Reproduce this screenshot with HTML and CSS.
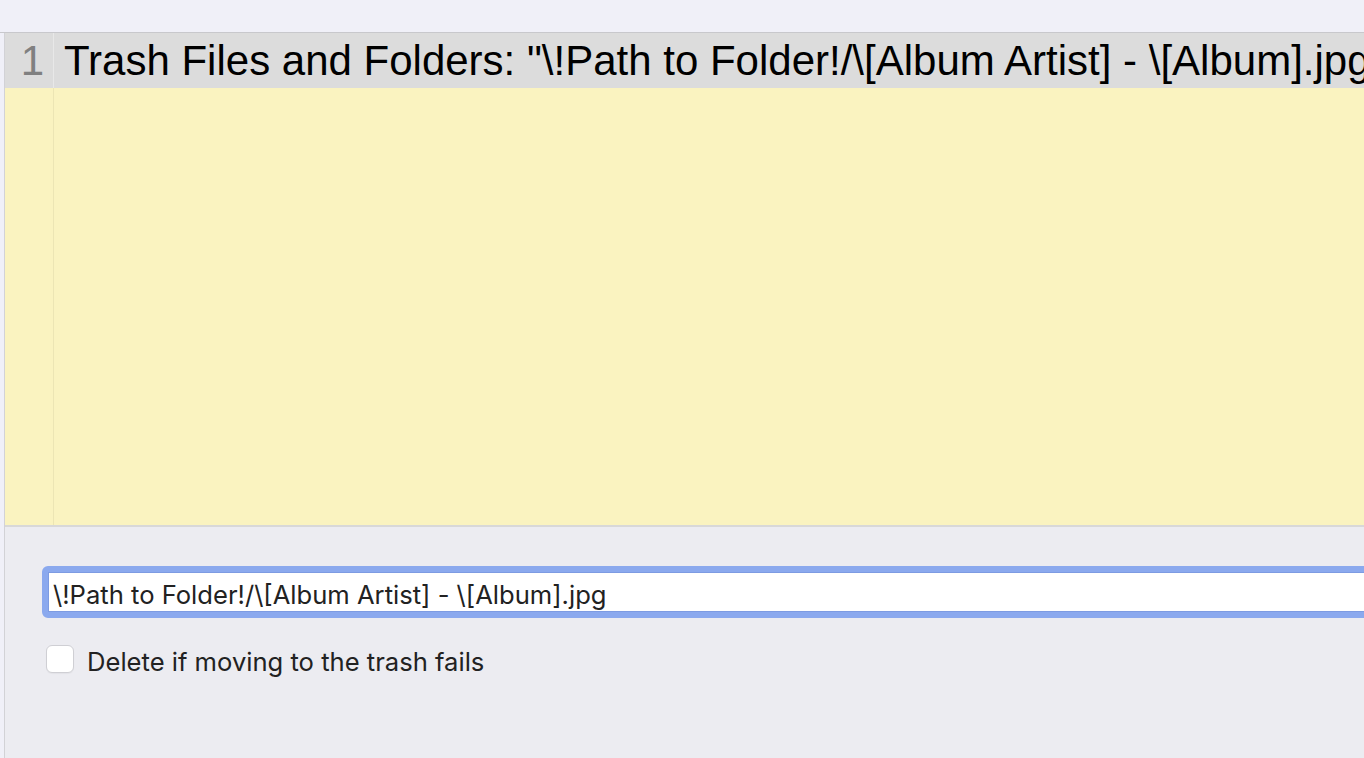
FILE: index.html
```html
<!DOCTYPE html>
<html lang="en">
<head>
    <meta charset="UTF-8">
    <meta name="viewport" content="width=device-width, initial-scale=1.0">
    <title>Trash Files and Folders</title>
    <link rel="stylesheet" href="styles.css">
</head>
<body>
    <div class="topbar"></div>
    <div class="editor">
        <div class="row header">
            <div class="gutter">1</div>
            <div class="line">Trash Files and Folders: "\!Path to Folder!/\[Album Artist] - \[Album].jpg"</div>
        </div>
        <div class="row notes">
            <div class="gutter"></div>
            <div class="line"></div>
        </div>
        <div class="panel">
            <input type="text" class="path" value="\!Path to Folder!/\[Album Artist] - \[Album].jpg">
            <label class="check">
                <span class="box"></span>
                <span class="text">Delete if moving to the trash fails</span>
            </label>
        </div>
    </div>
</body>
</html>
```

FILE: styles.css
```css
body {
    margin: 0;
    background-color: #f0f0f8;
    overflow: hidden;
}
.topbar {
    height: 32px;
    border-bottom: 1px solid #c8c8cc;
}
.editor {
    margin-left: 4px;
    border-left: 1px solid #d2d2d6;
    height: 725px;
    display: flex;
    flex-direction: column;
}
.row {
    display: flex;
}
.gutter {
    width: 49px;
    flex-shrink: 0;
    box-sizing: border-box;
    text-align: right;
    padding-right: 9px;
    color: #808080;
}
.line {
    flex: 1;
    white-space: nowrap;
    overflow: hidden;
    padding-left: 10px;
    color: #000;
}
.header {
    height: 55px;
    background-color: #dcdcdc;
    font-family: "Liberation Sans", Arial, sans-serif;
    font-size: 42px;
    line-height: 56px;
}
.header .gutter {
    border-right: 1px solid #e8e8e8;
}
.notes {
    height: 437px;
    background-color: #faf3c0;
    border-bottom: 2px solid #d8d8d8;
}
.notes .gutter {
    border-right: 1px solid #ece5b4;
}
.panel {
    flex: 1;
    background-color: #ececf1;
    padding: 39px 0 0 37px;
    font-family: Inter, "Noto Sans", sans-serif;
    font-size: 25.6px;
    color: #222;
}
.path {
    display: block;
    box-sizing: border-box;
    width: calc(100% + 10px);
    height: 52px;
    margin: 0;
    padding: 5px 0 0 5px;
    border: 6px solid #8ba9ee;
    border-radius: 6px;
    box-shadow: inset 0 0 0 1px #7d9be2;
    background: #fff;
    font-family: inherit;
    font-size: 25.6px;
    color: #222;
    outline: none;
}
.check {
    display: flex;
    align-items: flex-start;
    gap: 13px;
    margin-top: 27px;
    margin-left: 4px;
}
.box {
    width: 26px;
    height: 26px;
    flex-shrink: 0;
    border: 1px solid #cfcfd4;
    border-radius: 6px;
    background: #fff;
    box-shadow: 0 1px 1px rgba(0, 0, 0, 0.04);
}
.text {
    line-height: 31px;
    margin-top: 1px;
}
```
